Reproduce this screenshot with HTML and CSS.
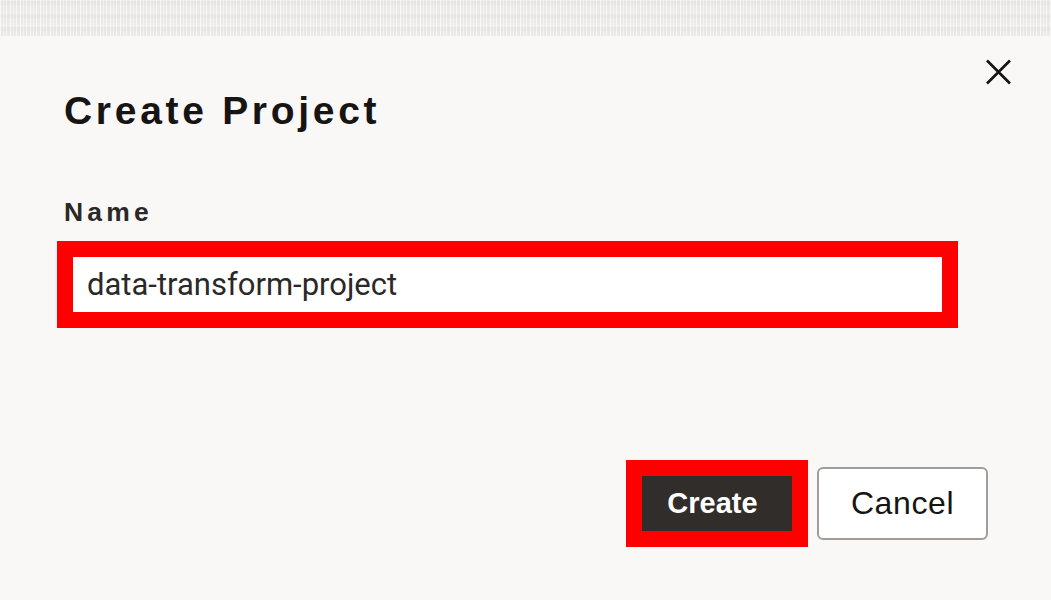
FILE: index.html
```html
<!DOCTYPE html>
<html lang="en">
<head>
<meta charset="utf-8">
<title>Create Project</title>
<link rel="stylesheet" href="styles.css">
</head>
<body>
<div class="backdrop-strip"></div>
<div class="dialog">
  <div class="dialog-header">
    <h1 class="dialog-title">Create Project</h1>
    <button class="close-btn" aria-label="Close">
      <svg width="27" height="26" viewBox="0 0 27 26"><path d="M2 1.5 L25 24.5 M25 1.5 L2 24.5" stroke="#161513" stroke-width="2.7" fill="none"/></svg>
    </button>
  </div>
  <div class="dialog-body">
    <label class="field-label" for="name">Name</label>
    <div class="highlight field-highlight">
      <input id="name" class="text-input" type="text" value="data-transform-project">
    </div>
  </div>
  <div class="dialog-footer">
    <div class="highlight">
      <button class="btn btn-primary">Create</button>
    </div>
    <button class="btn btn-secondary">Cancel</button>
  </div>
</div>
</body>
</html>
```
FILE: styles.css
```css
* { box-sizing: border-box; }
html, body { margin: 0; padding: 0; }
body {
  width: 1051px;
  height: 600px;
  overflow: hidden;
  background: #f9f8f6;
  font-family: "Liberation Sans", Arial, sans-serif;
  color: #161513;
}
.backdrop-strip {
  height: 36px;
  background:
    repeating-linear-gradient(90deg, rgba(255,255,255,0.7) 0 1px, rgba(255,255,255,0) 1px 3px, rgba(255,255,255,0.45) 3px 4px, rgba(255,255,255,0) 4px 6px, rgba(255,255,255,0.6) 6px 7px, rgba(255,255,255,0) 7px 10px),
    repeating-linear-gradient(0deg, #ebe9e7 0 5px, #e6e4e2 5px 9px, #eeecea 9px 13px);
}
.dialog {
  background: #f9f8f6;
}
.dialog-header {
  display: flex;
  justify-content: space-between;
  align-items: flex-start;
  padding: 18px 35px 0 64px;
}
.dialog-title {
  margin: 34px 0 0 0;
  font-size: 39px;
  line-height: 46px;
  font-weight: 700;
  letter-spacing: 3.7px;
  color: #161513;
}
.close-btn {
  width: 36px;
  height: 36px;
  padding: 0;
  border: 0;
  background: transparent;
  display: flex;
  align-items: center;
  justify-content: center;
}
.dialog-body {
  padding: 63px 0 0 57px;
}
.field-label {
  display: block;
  margin-left: 7px;
  font-size: 26.5px;
  line-height: 30px;
  font-weight: 700;
  letter-spacing: 4.2px;
  color: #2b2927;
}
.highlight {
  border: 16px solid #ff0000;
  display: inline-flex;
}
.field-highlight {
  margin-top: 14px;
  width: 901px;
}
.text-input {
  width: 100%;
  height: 55px;
  border: 0;
  outline: none;
  background: #ffffff;
  padding: 0 0 0 14px;
  font-family: Roboto, "Liberation Sans", sans-serif;
  font-size: 31px;
  color: #2b2927;
}
.dialog-footer {
  display: flex;
  justify-content: flex-end;
  align-items: center;
  gap: 9px;
  padding: 132px 63px 0 0;
}
.btn {
  font-family: "Liberation Sans", Arial, sans-serif;
  cursor: pointer;
}
.btn-primary {
  width: 150px;
  height: 55px;
  border: 0;
  background: #312d2a;
  color: #ffffff;
  font-size: 29px;
  font-weight: 700;
  padding: 0 9px 0 0;
}
.btn-secondary {
  width: 171px;
  height: 73px;
  border: 2px solid #a19d9a;
  border-radius: 6px;
  background: #ffffff;
  color: #161513;
  font-size: 32px;
  letter-spacing: 0.6px;
  padding: 0;
}
```
